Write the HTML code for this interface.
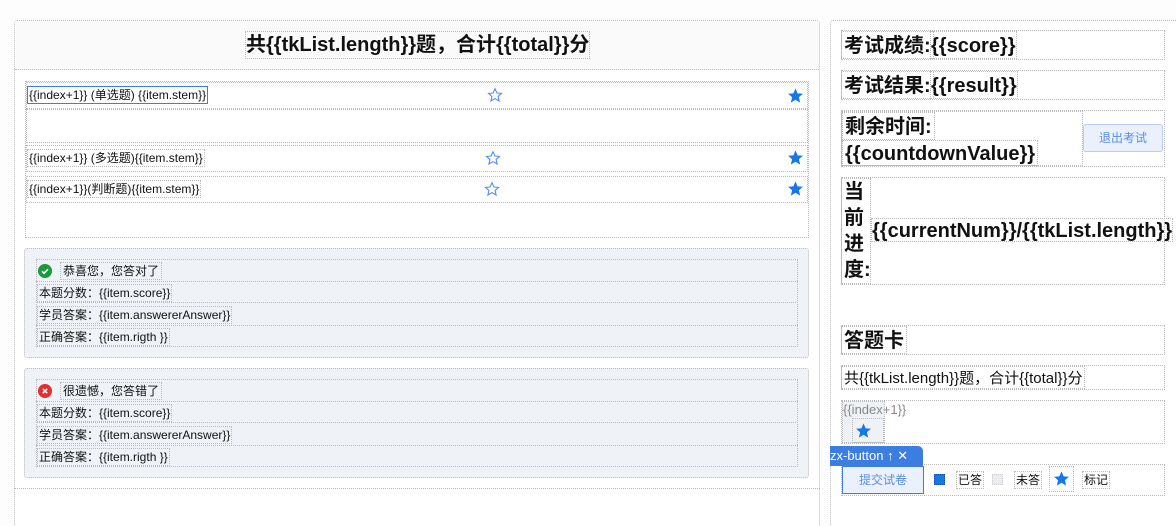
<!DOCTYPE html>
<html><head><meta charset="utf-8"><style>
*{box-sizing:border-box;margin:0;padding:0}
html,body{width:1176px;height:526px;overflow:hidden}
body{background:#fdfdfd;font-family:"Liberation Sans","Noto Sans CJK SC",sans-serif;color:#111;position:relative}
.a{position:absolute}
.d{border:1px dotted #bbb}
.s{font-size:12px;line-height:14px;white-space:nowrap}
.b{font-weight:bold;white-space:nowrap}
svg{display:block}
</style></head><body>
<!-- left panel -->
<div class="a d" style="left:14px;top:20px;width:806px;height:520px;background:#fff;border-radius:3px"></div>
<div class="a d" style="left:15px;top:21px;width:804px;height:49px;background:#fafafa;border-width:0 0 1px 0"></div>
<div class="a d b" style="left:245px;top:31px;width:345px;height:28px;font-size:20px;line-height:26px;text-align:center;background:#fafafa">共{{tkList.length}}题，合计{{total}}分</div>

<div class="a d" style="left:25px;top:81px;width:784px;height:157px"></div>
<div class="a d" style="left:26px;top:82px;width:782px;height:27px"></div>
<div class="a d" style="left:26px;top:109px;width:782px;height:34px"></div>
<div class="a d" style="left:26px;top:145px;width:782px;height:27px"></div>
<div class="a d" style="left:26px;top:176px;width:782px;height:27px"></div>
<div class="a s" style="left:27px;top:86px;padding:1px 1px;border:1px solid #3b7de0">{{index+1}} (单选题) {{item.stem}}</div>
<div class="a s d" style="left:27px;top:149px;padding:1px 1px">{{index+1}} (多选题){{item.stem}}</div>
<div class="a s d" style="left:27px;top:180px;padding:1px 1px">{{index+1}}(判断题){{item.stem}}</div>
<svg class="a" style="left:487px;top:87px" width="16" height="16" viewBox="0 0 24 24"><polygon points="12,2.5 14.9,9 21.8,9.6 16.6,14.2 18.2,21 12,17.4 5.8,21 7.4,14.2 2.2,9.6 9.1,9" fill="none" stroke="#4a8ef0" stroke-width="1.6"/></svg>
<svg class="a" style="left:485px;top:150px" width="16" height="16" viewBox="0 0 24 24"><polygon points="12,2.5 14.9,9 21.8,9.6 16.6,14.2 18.2,21 12,17.4 5.8,21 7.4,14.2 2.2,9.6 9.1,9" fill="none" stroke="#4a8ef0" stroke-width="1.6"/></svg>
<svg class="a" style="left:484px;top:181px" width="16" height="16" viewBox="0 0 24 24"><polygon points="12,2.5 14.9,9 21.8,9.6 16.6,14.2 18.2,21 12,17.4 5.8,21 7.4,14.2 2.2,9.6 9.1,9" fill="none" stroke="#4a8ef0" stroke-width="1.6"/></svg>
<svg class="a" style="left:787px;top:87px" width="17" height="17" viewBox="0 0 24 24"><polygon points="12,2 15,9 22.5,9.6 16.8,14.5 18.6,22 12,18 5.4,22 7.2,14.5 1.5,9.6 9,9" fill="#1677e8"/></svg>
<svg class="a" style="left:787px;top:149px" width="17" height="17" viewBox="0 0 24 24"><polygon points="12,2 15,9 22.5,9.6 16.8,14.5 18.6,22 12,18 5.4,22 7.2,14.5 1.5,9.6 9,9" fill="#1677e8"/></svg>
<svg class="a" style="left:787px;top:180px" width="17" height="17" viewBox="0 0 24 24"><polygon points="12,2 15,9 22.5,9.6 16.8,14.5 18.6,22 12,18 5.4,22 7.2,14.5 1.5,9.6 9,9" fill="#1677e8"/></svg>

<!-- feedback boxes -->
<div class="a d" style="left:24px;top:248px;width:785px;height:110px;background:#eff2f6;border-radius:3px"></div>
<div class="a d" style="left:36px;top:259px;width:762px;height:88px"></div>
<div class="a d" style="left:36px;top:281px;width:762px;height:22px;border-width:1px 0"></div>
<div class="a d" style="left:36px;top:325px;width:762px;height:1px;border-width:1px 0 0 0"></div>
<svg class="a" style="left:38px;top:264px" width="14" height="14" viewBox="0 0 14 14"><circle cx="7" cy="7" r="7" fill="#1a9a3c"/><path d="M4 7.2l2 2 4-4" stroke="#fff" stroke-width="1.6" fill="none"/></svg>
<div class="a s d" style="left:60px;top:262px;padding:1px 2px">恭喜您，您答对了</div>
<div class="a s d" style="left:37px;top:284px;padding:1px 1px">本题分数：{{item.score}}</div>
<div class="a s d" style="left:37px;top:306px;padding:1px 1px">学员答案：{{item.answererAnswer}}</div>
<div class="a s d" style="left:37px;top:328px;padding:1px 1px">正确答案：{{item.rigth }}</div>

<div class="a d" style="left:24px;top:368px;width:785px;height:110px;background:#eff2f6;border-radius:3px"></div>
<div class="a d" style="left:36px;top:379px;width:762px;height:88px"></div>
<div class="a d" style="left:36px;top:401px;width:762px;height:22px;border-width:1px 0"></div>
<div class="a d" style="left:36px;top:445px;width:762px;height:1px;border-width:1px 0 0 0"></div>
<svg class="a" style="left:38px;top:384px" width="14" height="14" viewBox="0 0 14 14"><circle cx="7" cy="7" r="7" fill="#e03030"/><path d="M4.8 4.8l4.4 4.4M9.2 4.8l-4.4 4.4" stroke="#fff" stroke-width="1.5"/></svg>
<div class="a s d" style="left:60px;top:382px;padding:1px 2px">很遗憾，您答错了</div>
<div class="a s d" style="left:37px;top:404px;padding:1px 1px">本题分数：{{item.score}}</div>
<div class="a s d" style="left:37px;top:426px;padding:1px 1px">学员答案：{{item.answererAnswer}}</div>
<div class="a s d" style="left:37px;top:448px;padding:1px 1px">正确答案：{{item.rigth }}</div>
<div class="a d" style="left:14px;top:488px;width:806px;height:1px;border-width:1px 0 0 0"></div>

<!-- right panel -->
<div class="a d" style="left:830px;top:20px;width:360px;height:520px;background:#fff;border-radius:3px"></div>
<div class="a d" style="left:841px;top:30px;width:324px;height:30px"></div>
<div class="a d b" style="left:841px;top:31px;height:28px;font-size:20px;line-height:28px;padding:0 2px">考试成绩:</div>
<div class="a d b" style="left:930px;top:31px;height:28px;font-size:20px;line-height:28px">{{score}}</div>
<div class="a d" style="left:841px;top:70px;width:324px;height:30px"></div>
<div class="a d b" style="left:841px;top:71px;height:28px;font-size:20px;line-height:28px;padding:0 2px">考试结果:</div>
<div class="a d b" style="left:930px;top:71px;height:28px;font-size:20px;line-height:28px">{{result}}</div>
<div class="a d" style="left:841px;top:110px;width:324px;height:57px"></div>
<div class="a d" style="left:841px;top:111px;width:242px;height:55px"></div>
<div class="a d b" style="left:842px;top:112px;height:28px;font-size:20px;line-height:28px;padding:0 2px">剩余时间:</div>
<div class="a d b" style="left:842px;top:140px;height:26px;font-size:20px;line-height:26px;padding:0 2px">{{countdownValue}}</div>
<div class="a" style="left:1083px;top:124px;width:80px;height:28px;border:1px solid #b7cdf0;border-radius:3px;background:#eaf1fd;color:#5b8ee0;font-size:12px;line-height:26px;text-align:center">退出考试</div>
<div class="a d" style="left:841px;top:177px;width:324px;height:108px"></div>
<div class="a d b" style="left:841px;top:178px;width:30px;height:106px;font-size:20px;line-height:26px;padding-left:2px;white-space:normal">当<br>前<br>进<br>度:</div>
<div class="a d b" style="left:871px;top:218px;height:24px;font-size:20px;line-height:24px">{{currentNum}}/{{tkList.length}}</div>

<div class="a d" style="left:841px;top:325px;width:324px;height:30px"></div>
<div class="a d b" style="left:841px;top:326px;height:28px;font-size:20px;line-height:28px;padding:0 2px">答题卡</div>
<div class="a d" style="left:841px;top:365px;width:324px;height:25px"></div>
<div class="a d" style="left:841px;top:366px;height:23px;font-size:15px;line-height:23px;padding:0 2px;white-space:nowrap">共{{tkList.length}}题，合计{{total}}分</div>
<div class="a d" style="left:841px;top:400px;width:324px;height:44px"></div>
<div class="a" style="left:842px;top:401px;width:43px;height:42px;background:#eef1f5;border:1px dotted #bbb"></div>
<div class="a" style="left:843px;top:401px;font-size:13px;line-height:17px;color:#888;white-space:nowrap">{{index+1}}</div>
<div class="a d" style="left:852px;top:418px;width:32px;height:25px"></div>
<svg class="a" style="left:855px;top:422px" width="17" height="17" viewBox="0 0 24 24"><polygon points="12,2 15,9 22.5,9.6 16.8,14.5 18.6,22 12,18 5.4,22 7.2,14.5 1.5,9.6 9,9" fill="#1677e8"/></svg>
<div class="a d" style="left:841px;top:464px;width:324px;height:32px"></div>
<div class="a" style="left:830px;top:446px;width:93px;height:20px;background:#3b7de0;border-radius:0 5px 0 0;color:#fff;font-size:13px;line-height:20px;white-space:nowrap">zx-button ↑ ✕</div>
<div class="a" style="left:842px;top:466px;width:82px;height:28px;border:1px solid #3b7de0;background:#eaf1fd;color:#5b8ee0;font-size:12px;line-height:26px;text-align:center">提交试卷</div>
<div class="a" style="left:934px;top:474px;width:11px;height:11px;background:#1677e8;border:1px dotted #0a4fb0"></div>
<div class="a s d" style="left:956px;top:471px;padding:1px 1px">已答</div>
<div class="a" style="left:992px;top:474px;width:11px;height:11px;background:#e9edf2;border:1px dotted #ccc"></div>
<div class="a s d" style="left:1014px;top:471px;padding:1px 1px">未答</div>
<div class="a d" style="left:1049px;top:466px;width:25px;height:26px"></div>
<svg class="a" style="left:1053px;top:470px" width="17" height="17" viewBox="0 0 24 24"><polygon points="12,2 15,9 22.5,9.6 16.8,14.5 18.6,22 12,18 5.4,22 7.2,14.5 1.5,9.6 9,9" fill="#1677e8"/></svg>
<div class="a s d" style="left:1082px;top:471px;padding:1px 1px">标记</div>
</body></html>
